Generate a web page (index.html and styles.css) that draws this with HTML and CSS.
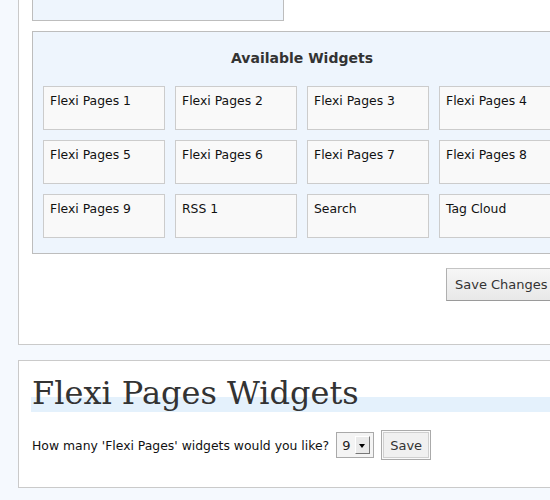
FILE: index.html
```html
<!DOCTYPE html>
<html>
<head>
<meta charset="utf-8">
<link rel="stylesheet" href="styles.css">
</head>
<body>
<div class="page">
  <div class="panel panel-top">
    <div class="top-box"></div>
    <div class="available">
      <h3 class="available-title">Available Widgets</h3>
      <div class="widget-grid">
        <div class="widget">Flexi Pages 1</div>
        <div class="widget">Flexi Pages 2</div>
        <div class="widget">Flexi Pages 3</div>
        <div class="widget">Flexi Pages 4</div>
        <div class="widget">Flexi Pages 5</div>
        <div class="widget">Flexi Pages 6</div>
        <div class="widget">Flexi Pages 7</div>
        <div class="widget">Flexi Pages 8</div>
        <div class="widget">Flexi Pages 9</div>
        <div class="widget">RSS 1</div>
        <div class="widget">Search</div>
        <div class="widget">Tag Cloud</div>
      </div>
    </div>
    <div class="save-row">
      <button class="btn-save-changes">Save Changes</button>
    </div>
  </div>

  <div class="panel panel-bottom">
    <h2 class="page-title">Flexi Pages Widgets</h2>
    <div class="count-row">
      <span class="count-label">How many 'Flexi Pages' widgets would you like?</span>
      <span class="fake-select"><span class="fake-select-value">9</span><span class="fake-select-arrow"></span></span>
      <button class="btn-save">Save</button>
    </div>
  </div>
</div>
</body>
</html>
```
FILE: styles.css
```css
html, body {
  margin: 0;
  padding: 0;
  background: #f5f9fe;
  overflow: hidden;
}
.page {
  width: 550px;
  height: 500px;
  overflow: hidden;
  padding-left: 18px;
  box-sizing: border-box;
  font-family: "DejaVu Sans", Verdana, sans-serif;
  font-size: 12.4px;
  color: #222;
}
.panel {
  width: 700px;
  background: #fff;
  border: 1px solid #cacaca;
  box-sizing: border-box;
  padding-left: 13px;
}
.panel-top {
  border-top: none;
  padding-bottom: 43px;
}
.top-box {
  width: 252px;
  height: 21px;
  box-sizing: border-box;
  background: #eef5fd;
  border: 1px solid #bdbdbd;
  border-top: none;
}
.available {
  margin-top: 10px;
  width: 548px;
  box-sizing: border-box;
  background: #eef5fd;
  border: 1px solid #bdbdbd;
  padding: 0 18px 15px 10px;
}
.available-title {
  margin: 0;
  padding: 16px 0 18px;
  text-align: center;
  font-size: 14px;
  font-weight: bold;
  color: #333;
  line-height: 20px;
}
.widget-grid {
  display: grid;
  grid-template-columns: repeat(4, 122px);
  grid-auto-rows: 44px;
  column-gap: 10px;
  row-gap: 10px;
}
.widget {
  background: #f9f9f9;
  border: 1px solid #cccccc;
  box-sizing: border-box;
  padding: 6px 6px 5px;
  line-height: 16px;
  color: #111;
}
.save-row {
  display: flex;
  padding-top: 14px;
  padding-left: 414px;
}
.btn-save-changes {
  font-family: "DejaVu Sans", Verdana, sans-serif;
  font-size: 13px;
  color: #333;
  height: 33px;
  padding: 0 8px;
  background: linear-gradient(#f6f6f6, #e8e8e8);
  border: 1px solid #c4c4c4;
  border-bottom-color: #9a9a9a;
  border-right-color: #9a9a9a;
  border-left-color: #b0b0b0;
  white-space: nowrap;
}
.panel-bottom {
  margin-top: 15px;
  height: 128px;
  padding-top: 13px;
}
.page-title {
  margin: 0;
  font-family: "DejaVu Serif", Georgia, serif;
  font-weight: normal;
  font-size: 32px;
  line-height: 38px;
  color: #333;
  background: linear-gradient(to bottom, transparent 0, transparent 60%, #e4f1fc 60%, #e4f1fc 100%);
  margin-left: -1px;
  padding-left: 1px;
}
.count-row {
  display: flex;
  align-items: center;
  margin-top: 18px;
}
.count-label {
  color: #111;
}
.fake-select {
  display: flex;
  align-items: center;
  margin-left: 7px;
  width: 38px;
  height: 26px;
  box-sizing: border-box;
  border: 1px solid #a9a9a9;
  background: #f4f4f4;
  padding-left: 5px;
  font-size: 13px;
  color: #222;
}
.fake-select-value {
  flex: 1;
}
.fake-select-arrow {
  width: 15px;
  height: 18px;
  margin-right: 3px;
  box-sizing: border-box;
  background: #eaeaea;
  border: 1px solid;
  border-color: #fff #777 #777 #fff;
  position: relative;
}
.fake-select-arrow::after {
  content: "";
  position: absolute;
  left: 3px;
  top: 7px;
  border-left: 3.5px solid transparent;
  border-right: 3.5px solid transparent;
  border-top: 4px solid #000;
}
.btn-save {
  margin-left: 7px;
  width: 50px;
  height: 30px;
  box-sizing: border-box;
  font-family: "DejaVu Sans", Verdana, sans-serif;
  font-size: 13px;
  color: #333;
  background: #f0f0f0;
  border: 1px solid #aaa;
  box-shadow: inset 0 0 0 1px #fafafa, inset 0 0 0 2px #cfcfcf;
  padding: 0;
}
```
